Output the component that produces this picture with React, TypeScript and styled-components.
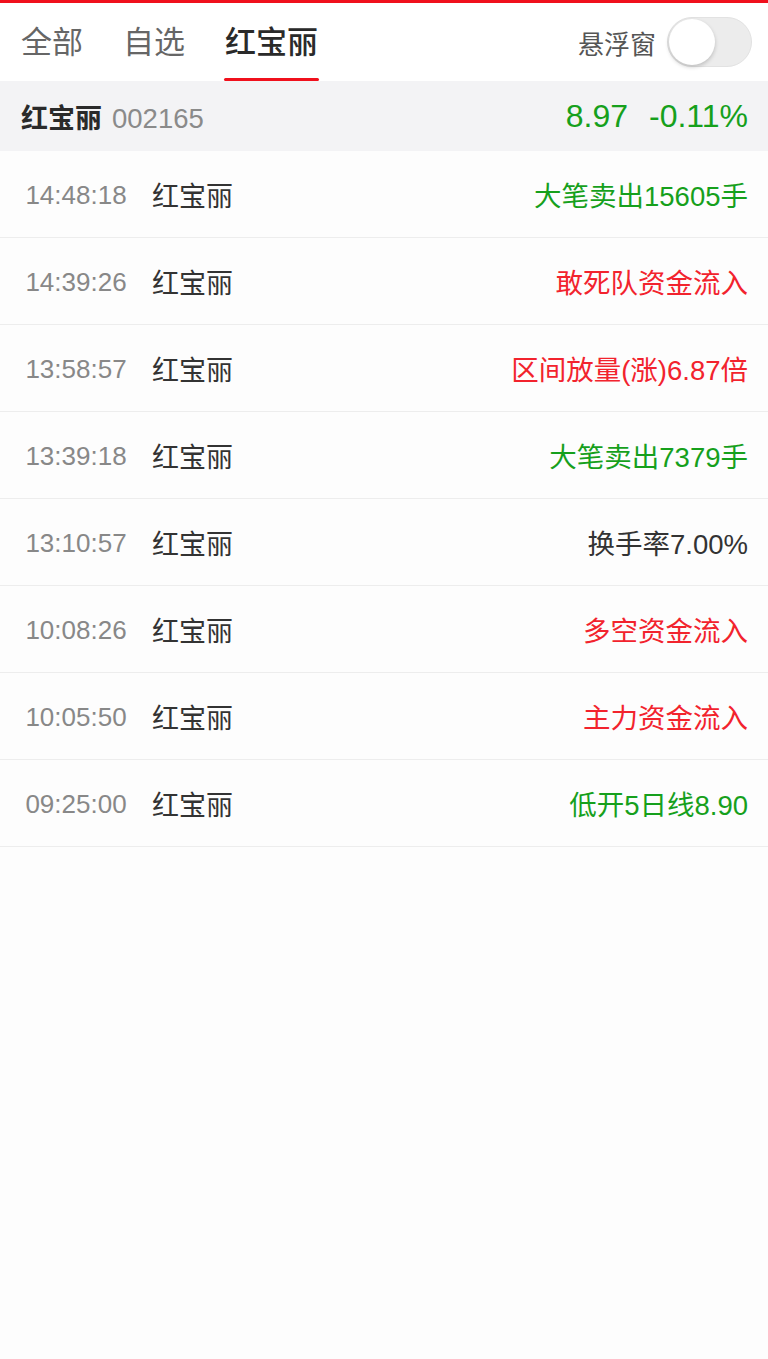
import React from 'react';
import styled, { createGlobalStyle } from 'styled-components';

type Tone = 'up' | 'down' | 'flat';

interface Alert {
  time: string;
  name: string;
  text: string;
  tone: Tone;
}

const alerts: Alert[] = [
  { time: '14:48:18', name: '红宝丽', text: '大笔卖出15605手', tone: 'down' },
  { time: '14:39:26', name: '红宝丽', text: '敢死队资金流入', tone: 'up' },
  { time: '13:58:57', name: '红宝丽', text: '区间放量(涨)6.87倍', tone: 'up' },
  { time: '13:39:18', name: '红宝丽', text: '大笔卖出7379手', tone: 'down' },
  { time: '13:10:57', name: '红宝丽', text: '换手率7.00%', tone: 'flat' },
  { time: '10:08:26', name: '红宝丽', text: '多空资金流入', tone: 'up' },
  { time: '10:05:50', name: '红宝丽', text: '主力资金流入', tone: 'up' },
  { time: '09:25:00', name: '红宝丽', text: '低开5日线8.90', tone: 'down' },
];

const toneColor: Record<Tone, string> = {
  up: '#f2232d',
  down: '#16a01c',
  flat: '#333333',
};

const tabs = ['全部', '自选', '红宝丽'];

const GlobalStyle = createGlobalStyle`
  html, body {
    margin: 0;
    padding: 0;
    background: #fdfdfd;
  }
  body {
    font-family: "Liberation Sans", "Noto Sans CJK SC", sans-serif;
  }
`;

const App: React.FC = () => {
  return (
    <StyledPage>
      <GlobalStyle />
      <StyledTopBar />
      <StyledTabBar>
        <StyledTabs>
          {tabs.map((t, i) => (
            <StyledTab key={t} $active={i === tabs.length - 1}>
              {t}
            </StyledTab>
          ))}
        </StyledTabs>
        <StyledFloat>
          <StyledFloatLabel>悬浮窗</StyledFloatLabel>
          <StyledSwitch>
            <StyledKnob />
          </StyledSwitch>
        </StyledFloat>
      </StyledTabBar>

      <StyledStockHeader>
        <StyledStockName>
          红宝丽<StyledCode>002165</StyledCode>
        </StyledStockName>
        <StyledQuote>
          <span>8.97</span>
          <span>-0.11%</span>
        </StyledQuote>
      </StyledStockHeader>

      <StyledList>
        {alerts.map((a) => (
          <StyledRow key={a.time}>
            <StyledTime>{a.time}</StyledTime>
            <StyledName>{a.name}</StyledName>
            <StyledEvent $tone={a.tone}>{a.text}</StyledEvent>
          </StyledRow>
        ))}
      </StyledList>
    </StyledPage>
  );
};

const StyledPage = styled.div`
  width: 768px;
  min-height: 1359px;
  background: #fdfdfd;
`;

const StyledTopBar = styled.div`
  height: 3px;
  background: #f0101c;
`;

const StyledTabBar = styled.div`
  height: 78px;
  display: flex;
  justify-content: space-between;
  align-items: stretch;
  padding: 0 16px 0 21px;
  background: #fff;
`;

const StyledTabs = styled.div`
  display: flex;
  gap: 40px;
`;

const StyledTab = styled.div<{ $active: boolean }>`
  position: relative;
  display: flex;
  align-items: center;
  padding-bottom: 6px;
  font-size: 31px;
  color: ${(p) => (p.$active ? '#2a2a2a' : '#666')};
  font-weight: ${(p) => (p.$active ? 500 : 400)};

  &::after {
    content: '';
    display: ${(p) => (p.$active ? 'block' : 'none')};
    position: absolute;
    left: -1px;
    right: -1px;
    bottom: 0;
    height: 3px;
    border-radius: 2px;
    background: #f0101c;
  }
`;

const StyledFloat = styled.div`
  display: flex;
  align-items: center;
  gap: 11px;
`;

const StyledFloatLabel = styled.span`
  font-size: 26px;
  color: #555;
`;

const StyledSwitch = styled.div`
  width: 85px;
  height: 50px;
  box-sizing: border-box;
  border-radius: 25px;
  background: #ececec;
  border: 1px solid #e2e2e2;
  padding: 1px;
  display: flex;
  align-items: center;
`;

const StyledKnob = styled.div`
  width: 46px;
  height: 46px;
  border-radius: 50%;
  background: #fff;
  box-shadow: 0 2px 4px rgba(0, 0, 0, 0.2);
`;

const StyledStockHeader = styled.div`
  height: 70px;
  display: flex;
  align-items: center;
  justify-content: space-between;
  padding: 0 20px 0 21px;
  background: #f3f3f5;
`;

const StyledStockName = styled.div`
  font-size: 27px;
  font-weight: 700;
  color: #2a2a2a;
  display: flex;
  align-items: baseline;
  gap: 10px;
`;

const StyledCode = styled.span`
  font-size: 27.5px;
  font-weight: 400;
  color: #8a8a8a;
`;

const StyledQuote = styled.div`
  display: flex;
  gap: 21px;
  font-size: 32px;
  color: #16a01c;
`;

const StyledList = styled.div`
  display: flex;
  flex-direction: column;
`;

const StyledRow = styled.div`
  height: 86px;
  display: flex;
  align-items: center;
  border-bottom: 1px solid #ededed;
  padding-right: 20px;
`;

const StyledTime = styled.span`
  width: 152px;
  padding-top: 3px;
  text-align: center;
  font-size: 26px;
  color: #888;
`;

const StyledName = styled.span`
  font-size: 27px;
  color: #333;
`;

const StyledEvent = styled.span<{ $tone: Tone }>`
  margin-left: auto;
  font-size: 27.5px;
  color: ${(p) => toneColor[p.$tone]};
`;

export default App;
